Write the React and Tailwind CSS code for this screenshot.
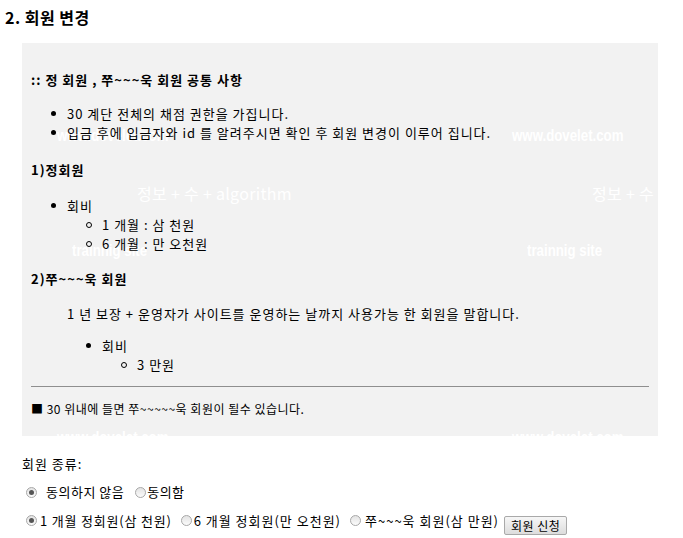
import React from "react";

function Disc() {
  return <span className="w-[5px] h-[5px] rounded-full bg-black shrink-0" />;
}
function Ring() {
  return <span className="w-[6px] h-[6px] rounded-full border border-black shrink-0" />;
}
function Radio({ checked }) {
  return (
    <span className="w-[11px] h-[11px] rounded-full border border-[#a8a8a8] bg-linear-to-b from-[#e3e3e3] to-[#fbfbfb] flex items-center justify-center shrink-0">
      {checked && <span className="w-[5px] h-[5px] rounded-full bg-[#555555]" />}
    </span>
  );
}

const WM = "absolute origin-left scale-x-[0.78] whitespace-nowrap text-[17px] leading-[18px] font-bold tracking-normal font-['Liberation_Sans',sans-serif]";

export default function App() {
  return (
    <div className="font-['Noto_Sans_CJK_KR','Noto_Sans',sans-serif] text-black text-[13px] tracking-[1px] bg-white w-[683px] h-[538px] overflow-hidden">
      <h2 className="pl-[5px] pt-[7px] text-[16px] leading-[20px] font-bold tracking-[0.5px]">2. 회원 변경</h2>

      <div className="relative overflow-hidden bg-[#f2f2f2] ml-[22px] mt-[16px] w-[636px] px-[9px] pt-[27px] pb-[19px]">
        {/* watermark pattern */}
        <div className="absolute inset-0 pointer-events-none text-white select-none">
          <span className={WM + " left-[35px] top-[84px]"}>www.dovelet.com</span>
          <span className={WM + " left-[490px] top-[84px]"}>www.dovelet.com</span>
          <span className="absolute left-[115px] top-[140px] text-[16px] leading-[20px] tracking-[0.3px] whitespace-nowrap">정보 + 수 + algorithm</span>
          <span className="absolute left-[570px] top-[140px] text-[16px] leading-[20px] tracking-[0.3px] whitespace-nowrap">정보 + 수 + algorithm</span>
          <span className={WM + " left-[50px] top-[199px]"}>trainnig site</span>
          <span className={WM + " left-[505px] top-[199px]"}>trainnig site</span>
          <span className={WM + " left-[35px] top-[386px]"}>www.dovelet.com</span>
          <span className={WM + " left-[490px] top-[386px]"}>www.dovelet.com</span>
        </div>

        <div className="relative">
          <p className="font-bold leading-[20px]">:: 정 회원 , 쭈~~~욱 회원 공통 사항</p>

          <ul className="mt-[14px] pl-[20px] leading-[19px]">
            <li className="flex items-center gap-[11px]"><Disc />30 계단 전체의 채점 권한을 가집니다.</li>
            <li className="flex items-center gap-[11px]"><Disc />입금 후에 입금자와 id 를 알려주시면 확인 후 회원 변경이 이루어 집니다.</li>
          </ul>

          <p className="mt-[18px] font-bold leading-[20px]">1)정회원</p>

          <ul className="mt-[16px] pl-[20px] leading-[19px]">
            <li className="flex items-center gap-[11px]"><Disc />회비</li>
            <li>
              <ul className="pl-[35px]">
                <li className="flex items-center gap-[10px]"><Ring />1 개월 : 삼 천원</li>
                <li className="flex items-center gap-[10px]"><Ring />6 개월 : 만 오천원</li>
              </ul>
            </li>
          </ul>

          <p className="mt-[16px] font-bold leading-[20px]">2)쭈~~~욱 회원</p>

          <p className="mt-[15px] pl-[36px] leading-[20px]">1 년 보장 + 운영자가 사이트를 운영하는 날까지 사용가능 한 회원을 말합니다.</p>

          <ul className="mt-[12px] pl-[55px] leading-[19px]">
            <li className="flex items-center gap-[11px]"><Disc />회비</li>
            <li>
              <ul className="pl-[35px]">
                <li className="flex items-center gap-[10px]"><Ring />3 만원</li>
              </ul>
            </li>
          </ul>

          <hr className="mt-[12px] border-0 border-t border-[#8f8f8f]" />

          <p className="mt-[14px] text-[12px] leading-[16px] tracking-[0.5px]">■ 30 위내에 들면 쭈~~~~~욱 회원이 될수 있습니다.</p>
        </div>
      </div>

      <div className="pl-[22px]">
        <p className="mt-[18px] leading-[20px]">회원 종류:</p>

        <div className="mt-[8px] flex items-center h-[20px] pl-[4px]">
          <Radio checked />
          <span className="ml-[9px] tracking-[0.5px]">동의하지 않음</span>
          <span className="ml-[11px]"><Radio /></span>
          <span className="ml-[1px] tracking-[0.5px]">동의함</span>
        </div>

        <div className="mt-[9px] flex items-start h-[20px] pl-[4px] leading-[20px]">
          <span className="mt-[4px]"><Radio checked /></span>
          <span className="ml-[3px] tracking-[0.8px]">1 개월 정회원(삼 천원)</span>
          <span className="mt-[4px] ml-[9px]"><Radio /></span>
          <span className="ml-[2px]">6 개월 정회원(만 오천원)</span>
          <span className="mt-[4px] ml-[9px]"><Radio /></span>
          <span className="ml-[4px]">쭈~~~욱 회원(삼 만원)</span>
          <button className="ml-[5px] mt-[5px] h-[19px] px-[6px] text-[12px] leading-[17px] tracking-[0.5px] border border-[#a9a9a9] rounded-[2px] bg-linear-to-b from-[#f6f6f6] to-[#dddddd] text-black">회원 신청</button>
        </div>
      </div>
    </div>
  );
}
